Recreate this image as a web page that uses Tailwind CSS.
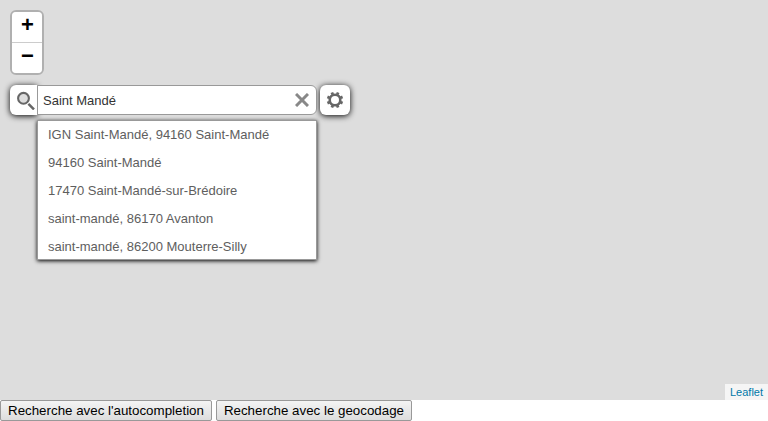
<!DOCTYPE html>
<html lang="fr">
<head>
<meta charset="utf-8">
<meta name="viewport" content="width=device-width, initial-scale=1">
<title>Recherche</title>
<script src="https://cdn.jsdelivr.net/npm/@tailwindcss/browser@4"></script>
</head>
<body class="flex min-h-screen flex-col bg-white font-['Liberation_Sans',Arial,sans-serif]">
<main class="flex flex-1 flex-col items-start bg-[#ddd]">
  <div class="mt-2.5 ml-2.5 flex flex-col rounded-md border-2 border-black/20 bg-clip-padding text-[22px] font-bold text-black">
    <button type="button" aria-label="Zoom avant" class="h-[31px] w-[30px] rounded-t border-b border-[#ccc] bg-white pb-1 pl-px leading-[26px]">+</button>
    <button type="button" aria-label="Zoom arrière" class="h-[30px] w-[30px] rounded-b bg-white pb-1 pl-px leading-[26px]">−</button>
  </div>

  <form class="mt-2.5 ml-2.5 flex" onsubmit="return false">
    <button type="submit" aria-label="Rechercher" class="h-[30px] w-[27px] rounded-l-md bg-white shadow-[0_1px_6px_#000]">
      <svg class="ml-1.5 size-5" viewBox="0 0 20 20" fill="none" stroke="#666">
        <circle cx="7.5" cy="8.3" r="5.4" fill="#ddd" stroke-width="2.1"/>
        <path d="M12.4 13.9L18 19.4" stroke-width="2.5"/>
      </svg>
    </button>
    <div class="relative">
      <input id="search" type="text" value="Saint Mandé" aria-label="Rechercher un lieu" autocomplete="off" class="block h-[30px] w-[280px] rounded-r-md border border-[#999] bg-white pr-8 pl-[5px] text-[13px] text-[#333] outline-none">
      <button type="reset" aria-label="Effacer" class="absolute top-2 right-2 size-3.5">
        <svg class="size-3.5" viewBox="0 0 14 14" stroke="#888" stroke-width="3"><path d="M1 1L13 13M13 1L1 13"/></svg>
      </button>
      <ul class="absolute top-[35px] left-0 w-[280px] border border-[#999] bg-white text-[13px] leading-7 text-[#5e5e5e] shadow-[0_1px_4px_#000]">
        <li class="h-7 px-2.5">IGN Saint-Mandé, 94160 Saint-Mandé</li>
        <li class="h-7 px-2.5">94160 Saint-Mandé</li>
        <li class="h-7 px-2.5">17470 Saint-Mandé-sur-Brédoire</li>
        <li class="h-7 px-2.5">saint-mandé, 86170 Avanton</li>
        <li class="-mb-0.5 h-7 px-2.5">saint-mandé, 86200 Mouterre-Silly</li>
      </ul>
    </div>
    <button type="button" aria-label="Recherche avancée" class="ml-[3px] flex size-[30px] items-center justify-center rounded-md bg-white shadow-[0_1px_6px_#000]">
      <svg class="size-[18px]" viewBox="-9 -9 18 18" fill="none" stroke="#666">
        <circle r="5.3" stroke-width="2.6"/>
        <g stroke-width="2.8">
          <path d="M0 -6V-8.2M0 6V8.2M-6 0H-8.2M6 0H8.2" transform="rotate(22.5)"/>
          <path d="M0 -6V-8.2M0 6V8.2M-6 0H-8.2M6 0H8.2" transform="rotate(67.5)"/>
        </g>
      </svg>
    </button>
  </form>

  <div class="mt-auto self-end bg-white/70 px-[5px] text-[11px] leading-4"><a href="#" class="text-[#0078a8]">Leaflet</a></div>
</main>
<div class="flex gap-1 text-[10pt] leading-[17px] text-black">
  <button type="button" class="h-[21px] rounded-xs border border-[#999] bg-linear-to-b from-[#f4f4f4] to-[#ddd] px-[7px]">Recherche avec l'autocompletion</button>
  <button type="button" class="h-[21px] rounded-xs border border-[#999] bg-linear-to-b from-[#f4f4f4] to-[#ddd] px-[7px]">Recherche avec le geocodage</button>
</div>
</body>
</html>
